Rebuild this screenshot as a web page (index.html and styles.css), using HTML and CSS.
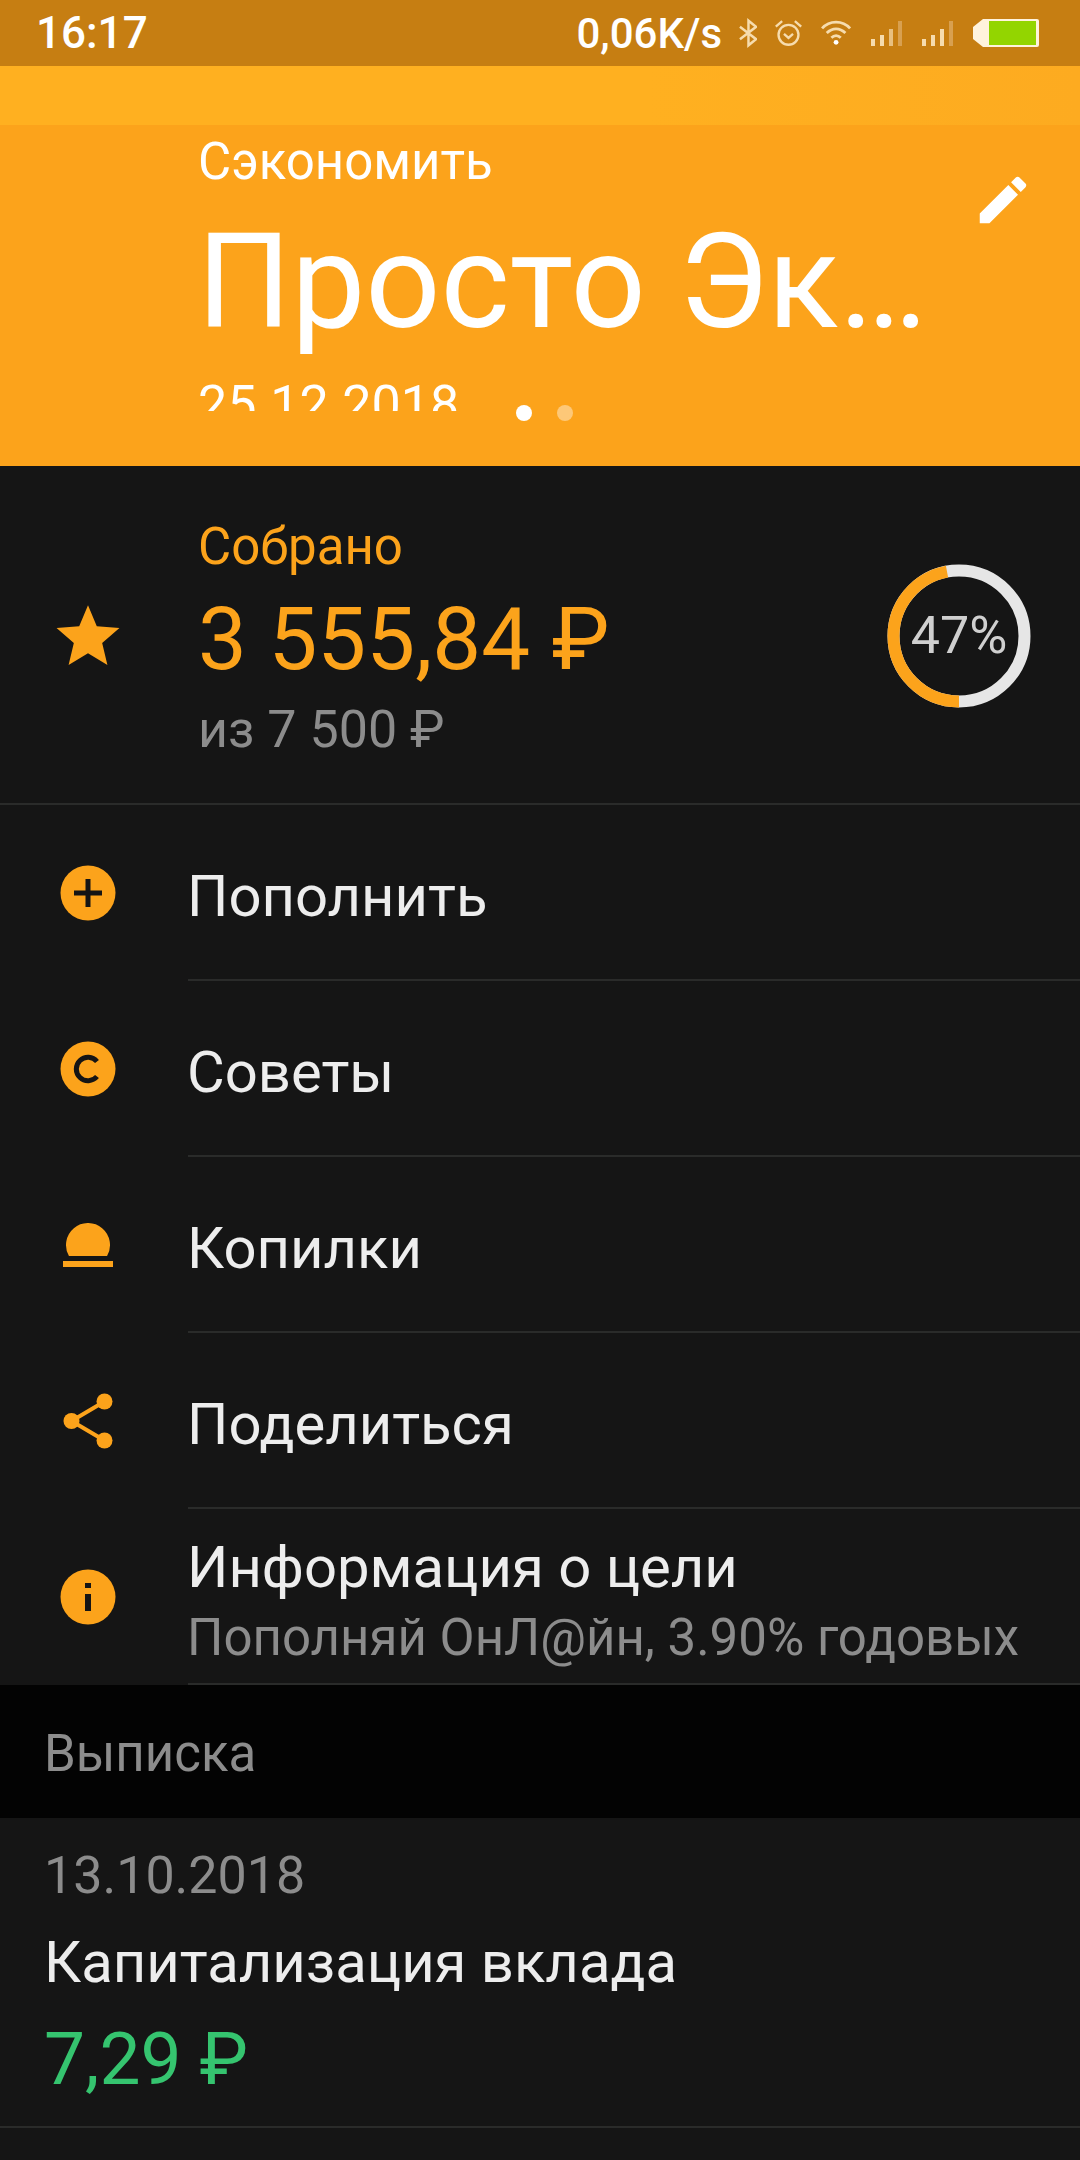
FILE: index.html
```html
<!DOCTYPE html>
<html lang="ru">
<head>
<meta charset="utf-8">
<title>Просто Экономить</title>
<link rel="stylesheet" href="styles.css">
</head>
<body>
<div class="screen">
  <header class="status">
    <span class="clock">16:17</span>
    <div class="status-right">
      <span class="speed">0,06K/s</span>
      <svg class="si" width="18" height="30" viewBox="1 1 19 28" fill="none" stroke="#f6dcae" stroke-width="2.6"><path d="M2 8.500 19 21.500 11 28V2L19 8.500 2 21.500"/></svg>
      <svg class="si" width="29" height="30" viewBox="0 0 32 32" fill="none" stroke="#f6dcae" stroke-width="2.6"><circle cx="16" cy="18" r="11"/><path d="M11 17l5 4.500 5-4.500M2 9l7-6M30 9l-7-6"/></svg>
      <svg class="si" width="34" height="28" viewBox="0 0 36 30" fill="none" stroke="#f6dcae" stroke-width="3"><path d="M2 10C10 1 24 1 32 10M7 15C13 9 21 9 27 15M12 20C15 17 19 17 22 20"/><circle cx="17" cy="25" r="2.600" fill="#fff" stroke="none"/></svg>
      <svg class="si" width="34" height="26" viewBox="0 0 34 26"><path fill="#f6dcae" d="M0 19h4v7H0zM9 15h4v11H9z"/><path fill="#e8c080" d="M18 9h4v17h-4z"/><path fill="#d8a050" d="M27 1h4v25h-4z"/></svg>
      <svg class="si" width="34" height="26" viewBox="0 0 34 26"><path fill="#f6dcae" d="M0 19h4v7H0zM9 15h4v11H9zM18 9h4v17h-4z"/><path fill="#d8a050" d="M27 1h4v25h-4z"/></svg>
      <svg class="si" width="66" height="30" viewBox="0 0 66 30"><path fill="#fff3dc" d="M10 1h54a2 2 0 0 1 2 2v24a2 2 0 0 1-2 2H10L0 21V9z"/><path fill="#93d500" d="M16 3h47v24H16z"/></svg>
    </div>
  </header>
  <div class="band"></div>
  <section class="hero">
    <div class="hero-top">
      <div class="hero-text">
        <div class="hero-kicker">Сэкономить</div>
        <h1 class="hero-title">Просто Эк…</h1>
        <div class="hero-date">25.12.2018</div>
      </div>
      <svg class="pencil" width="62" height="62" viewBox="0 0 24 24"><path fill="#fff" d="M3 17.250V21h3.750L17.810 9.940l-3.750-3.750L3 17.250zM20.710 7.040c.390-.390.390-1.020 0-1.410l-2.340-2.340c-.390-.390-1.020-.390-1.410 0l-1.830 1.830 3.750 3.750 1.830-1.830z"/></svg>
    </div>
    <div class="dots"><i class="dot"></i><i class="dot dot-dim"></i></div>
  </section>
  <section class="summary">
    <div class="icon-box">
      <svg width="70" height="68" viewBox="0 0 24 24"><path fill="#fca31b" d="M12 1.500l3.100 7.400 8 .650-6.100 5.250 1.850 7.800L12 18.450 5.150 22.600 7 14.800.900 9.550l8-.650z"/></svg>
    </div>
    <div class="summary-text">
      <div class="summary-label">Собрано</div>
      <div class="summary-amount">3 555,84 ₽</div>
      <div class="summary-total">из 7 500 ₽</div>
    </div>
    <div class="ring">
      <svg width="144" height="144" viewBox="0 0 144 144">
        <circle cx="72" cy="72" r="65.500" fill="none" stroke="#e6e6e6" stroke-width="12"/>
        <circle class="ring-arc" cx="72" cy="72" r="65.500" fill="none" stroke="#fca31b" stroke-width="12" stroke-dasharray="193.400 411.600"/>
      </svg>
      <span class="ring-label">47%</span>
    </div>
  </section>
  <nav class="menu">
    <div class="row">
      <div class="icon-box"><svg width="56" height="56" viewBox="0 0 56 56"><circle cx="28" cy="28" r="27.500" fill="#fca31b"/><path fill="#151515" d="M25.500 14h5v11.500H42v5H30.500V42h-5V30.500H14v-5h11.500z"/></svg></div>
      <div class="row-body"><span class="row-title">Пополнить</span></div>
    </div>
    <div class="row">
      <div class="icon-box"><svg width="56" height="56" viewBox="0 0 56 56"><circle cx="28" cy="28" r="27.500" fill="#fca31b"/><path fill="none" stroke="#151515" stroke-width="5" d="M37 20.500A11.700 11.700 0 1 0 37 35.500"/></svg></div>
      <div class="row-body"><span class="row-title">Советы</span></div>
    </div>
    <div class="row">
      <div class="icon-box"><svg width="50" height="44" viewBox="0 0 50 44"><path fill="#fca31b" d="M5.950 33A22 22 0 1 1 44.050 33ZM0 38h50v6H0z"/></svg></div>
      <div class="row-body"><span class="row-title">Копилки</span></div>
    </div>
    <div class="row">
      <div class="icon-box"><svg width="50" height="56" viewBox="0 0 50 56"><g fill="#fca31b"><circle cx="41.500" cy="8.500" r="8"/><circle cx="8.500" cy="28" r="8"/><circle cx="41.500" cy="47.500" r="8"/></g><path fill="none" stroke="#fca31b" stroke-width="4" d="M41.500 8.500 8.500 28l33 19.500"/></svg></div>
      <div class="row-body"><span class="row-title">Поделиться</span></div>
    </div>
    <div class="row">
      <div class="icon-box"><svg width="56" height="56" viewBox="0 0 56 56"><circle cx="28" cy="28" r="27.500" fill="#fca31b"/><path fill="#151515" d="M25 14h6v5h-6zM25 25h6v17h-6z"/></svg></div>
      <div class="row-body row-body-double">
        <span class="row-title">Информация о цели</span>
        <span class="row-sub">Пополняй ОнЛ@йн, 3.90% годовых</span>
      </div>
    </div>
  </nav>
  <div class="section-head">Выписка</div>
  <article class="entry">
    <div class="entry-date">13.10.2018</div>
    <div class="entry-title">Капитализация вклада</div>
    <div class="entry-amount">7,29 ₽</div>
  </article>
</div>
</body>
</html>
```

FILE: styles.css
```css
* { box-sizing: border-box; }
html, body { margin: 0; padding: 0; }
body { background: #151515; font-family: Roboto, "Noto Sans", sans-serif; }
.screen { width: 1080px; height: 2160px; overflow: hidden; background: #151515; }

.status { height: 66px; background: #c67e12; display: flex; align-items: center; justify-content: space-between; padding: 0 41px 0 36px; color: #fff; font-weight: 500; }
.clock { font-size: 44px; font-weight: 500; }
.status-right { display: flex; align-items: center; gap: 17px; }
.speed { font-size: 42px; font-weight: 500; }
.si { display: block; flex: none; }

.band { height: 59px; background: linear-gradient(90deg, #ffb020 0%, #ffb020 60%, #fdab20 100%); }

.hero { height: 341px; background: #fca31b; position: relative; overflow: hidden; }
.hero-top { display: flex; justify-content: space-between; align-items: flex-start; padding: 0 46px 0 198px; height: 286px; overflow: hidden; color: #fff; }
.hero-text { min-width: 0; }
.hero-kicker { font-size: 51px; line-height: 60px; margin-top: 7px; }
.hero-title { margin: 0 0 0 -1px; font-weight: 400; font-size: 132px; line-height: 156px; margin-top: 12px; white-space: nowrap; }
.hero-date { font-size: 52px; line-height: 60px; margin-top: 15px; }
.pencil { display: block; flex: none; margin-top: 44px; }
.dots { position: absolute; left: 516px; top: 280px; display: flex; gap: 25px; }
.dot { display: block; width: 16px; height: 16px; border-radius: 50%; background: #fff; }
.dot-dim { background: #fdc878; }

.summary { height: 339px; display: flex; align-items: center; border-bottom: 2px solid #2a2b2a; padding-right: 49px; }
.icon-box { width: 176px; margin-right: 12px; flex: none; display: flex; justify-content: center; align-items: center; }
.summary .icon-box { margin-right: 22px; }
.summary-text { flex: 1; min-width: 0; align-self: flex-start; padding-top: 51px; }
.summary-label { font-size: 51px; line-height: 60px; color: #fca31b; }
.summary-amount { font-size: 87px; line-height: 100px; color: #fca31b; margin-top: 12px; }
.summary-total { font-size: 52px; line-height: 60px; color: #8c8c8c; margin-top: 11px; }
.ring { position: relative; width: 144px; height: 144px; flex: none; display: flex; align-items: center; justify-content: center; top: 1px; }
.ring svg { position: absolute; inset: 0; }
.ring-arc { transform: rotate(90deg); transform-origin: 72px 72px; }
.ring-label { font-size: 52px; color: #cfcfcf; position: relative; }

.row { height: 176px; display: flex; align-items: center; }
.row-body { flex: 1; align-self: stretch; display: flex; flex-direction: column; justify-content: center; border-bottom: 2px solid #2a2b2a; min-width: 0; padding-top: 7px; }
.row-title { font-size: 58px; line-height: 68px; color: #ededed; margin-left: -1px; }
.row-sub { font-size: 51px; line-height: 60px; color: #8c8c8c; white-space: nowrap; margin: 7px 0 0 -1px; }
.row-body-double { justify-content: flex-start; padding-top: 24px; }

.section-head { height: 133px; background: #030303; color: #8c8c8c; font-size: 51px; padding: 4px 0 0 44px; display: flex; align-items: center; }

.entry { padding: 28px 44px 0; height: 310px; border-bottom: 2px solid #2a2b2a; }
.entry-date { font-size: 52px; line-height: 60px; color: #8c8c8c; }
.entry-title { font-size: 58px; line-height: 68px; color: #ededed; margin-top: 22px; }
.entry-amount { font-size: 73px; line-height: 86px; color: #35c46f; margin-top: 20px; }
```
